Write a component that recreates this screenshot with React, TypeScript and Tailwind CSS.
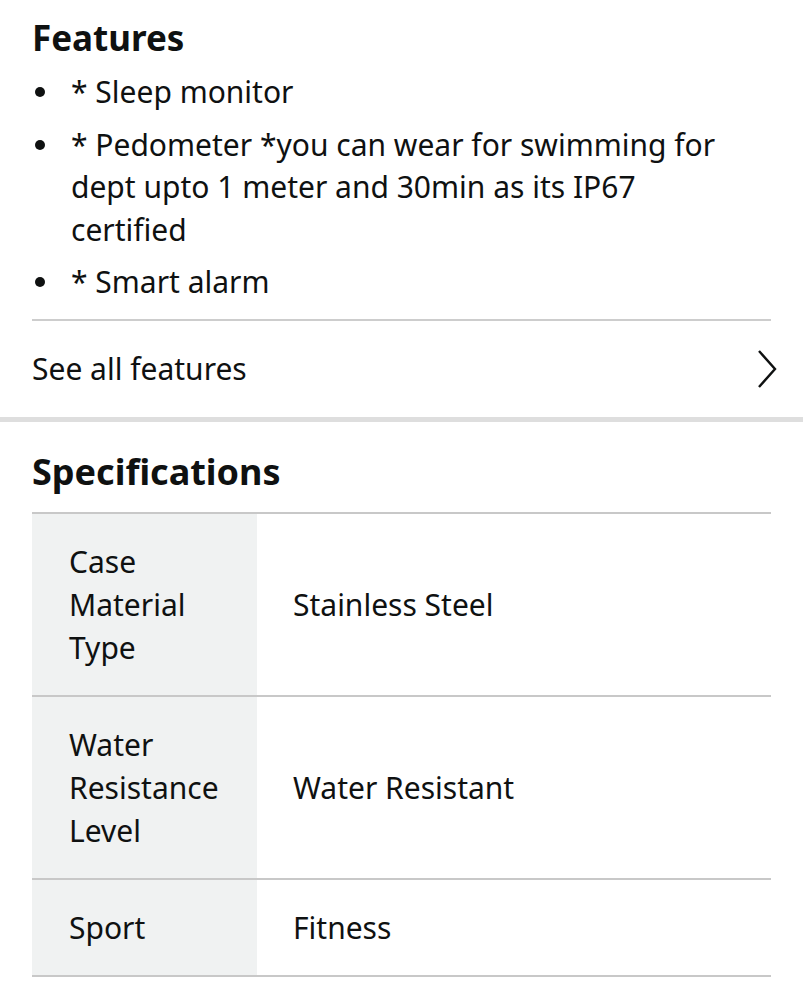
const features = [
  '* Sleep monitor',
  '* Pedometer *you can wear for swimming for dept upto 1 meter and 30min as its IP67 certified',
  '* Smart alarm',
]

const specs = [
  { label: 'Case Material Type', value: 'Stainless Steel' },
  { label: 'Water Resistance Level', value: 'Water Resistant' },
  { label: 'Sport', value: 'Fitness' },
]

export default function App() {
  return (
    <div className="min-h-[999px] w-[803px] bg-white text-[#0f1111] font-['Noto_Sans',sans-serif]">
      <section className="px-8 pt-[14px]">
        <h2 className="text-[35px] font-bold leading-[48px]">Features</h2>
        <ul className="mt-[9px] space-y-[10px] pb-[15px] pr-[28px]">
          {features.map((f) => (
            <li key={f} className="flex text-[30px] leading-[42.5px]">
              <span className="flex h-[42px] w-[39px] shrink-0 items-center pl-[3px]">
                <span className="h-[10px] w-[10px] rounded-full bg-[#0f1111]" />
              </span>
              <span>{f}</span>
            </li>
          ))}
        </ul>
        <div className="h-[2px] bg-[#cdcdcd]" />
        <div className="flex h-[96px] items-center justify-between">
          <span className="text-[30px]">See all features</span>
          <svg width="20" height="38" viewBox="0 0 20 38" className="mr-[-6px]" fill="none">
            <polyline points="2,1 18,19 2,37" stroke="#0f1111" strokeWidth="2.4" />
          </svg>
        </div>
      </section>
      <div className="h-[5px] bg-[#dedede]" />
      <section className="px-8 pt-[26px]">
        <h2 className="text-[36px] font-bold leading-[48px]">Specifications</h2>
        <div className="mt-[16px] border-t-2 border-[#c8c8c8]">
          {specs.map((s) => (
            <div key={s.label} className="flex border-b-2 border-[#c8c8c8] text-[30px] leading-[43px]">
              <div className="w-[225px] shrink-0 bg-[#f0f2f2] py-[26px] pl-[37px] pr-4">{s.label}</div>
              <div className="flex items-center pl-[36px]">{s.value}</div>
            </div>
          ))}
        </div>
      </section>
    </div>
  )
}
